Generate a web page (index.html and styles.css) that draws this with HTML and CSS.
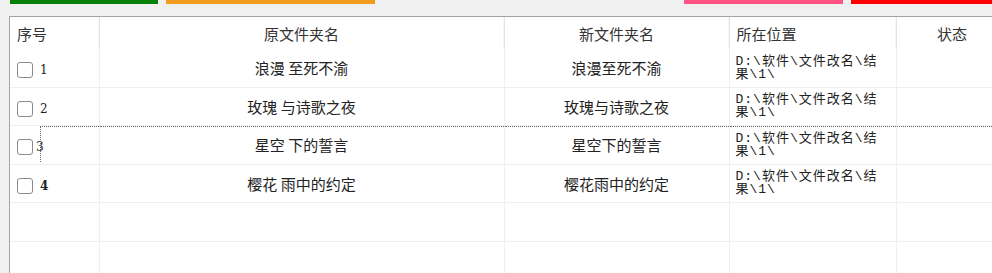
FILE: index.html
```html
<!DOCTYPE html>
<html lang="zh-CN">
<head>
  <meta charset="UTF-8">
  <meta name="viewport" content="width=device-width, initial-scale=1.0">
  <title>文件夹批量改名</title>
  <link rel="stylesheet" href="styles.css">
</head>
<body>
  <!-- 工具栏按钮 -->
  <div class="toolbar">
    <div class="tool-btn btn-green"></div>
    <div class="tool-btn btn-orange"></div>
    <div class="toolbar-space"></div>
    <div class="tool-btn btn-pink"></div>
    <div class="tool-btn btn-red"></div>
  </div>

  <!-- 文件夹列表 -->
  <div class="grid-box">
    <table class="grid">
      <colgroup>
        <col class="col-no">
        <col class="col-old">
        <col class="col-new">
        <col class="col-path">
        <col class="col-state">
      </colgroup>
      <thead>
        <tr>
          <th class="left">序号</th>
          <th>原文件夹名</th>
          <th>新文件夹名</th>
          <th class="left">所在位置</th>
          <th>状态</th>
        </tr>
      </thead>
      <tbody>
        <tr>
          <td class="no"><span class="check"></span><span class="num">1</span></td>
          <td class="center">浪漫 至死不渝</td>
          <td class="center">浪漫至死不渝</td>
          <td class="path">D:\软件\文件改名\结果\1\</td>
          <td></td>
        </tr>
        <tr>
          <td class="no"><span class="check"></span><span class="num">2</span></td>
          <td class="center">玫瑰 与诗歌之夜</td>
          <td class="center">玫瑰与诗歌之夜</td>
          <td class="path">D:\软件\文件改名\结果\1\</td>
          <td></td>
        </tr>
        <tr class="focused">
          <td class="no"><span class="check"></span><span class="num">3</span></td>
          <td class="center">星空 下的誓言</td>
          <td class="center">星空下的誓言</td>
          <td class="path">D:\软件\文件改名\结果\1\</td>
          <td></td>
        </tr>
        <tr>
          <td class="no"><span class="check"></span><span class="num bold">4</span></td>
          <td class="center">樱花 雨中的约定</td>
          <td class="center">樱花雨中的约定</td>
          <td class="path">D:\软件\文件改名\结果\1\</td>
          <td></td>
        </tr>
        <tr class="empty">
          <td></td><td></td><td></td><td></td><td></td>
        </tr>
        <tr class="empty">
          <td></td><td></td><td></td><td></td><td></td>
        </tr>
      </tbody>
    </table>
  </div>
</body>
</html>
```

FILE: styles.css
```css
html, body {
  margin: 0;
  padding: 0;
  overflow: hidden;
}

body {
  background: #f0f0f0;
  color: #333;
  font-family: "Noto Sans CJK SC", "Noto Sans", sans-serif;
  height: 273px;
}

/* Toolbar */
.toolbar {
  display: flex;
  gap: 8px;
  padding-left: 10px;
  height: 4px;
}

.tool-btn {
  height: 4px;
}

.btn-green {
  width: 148px;
  background: #078107;
}

.btn-orange {
  width: 209px;
  background: #f19b1f;
}

.toolbar-space {
  width: 293px;
}

.btn-pink {
  width: 159px;
  background: #ff5383;
}

.btn-red {
  flex: 1;
  background: #ff0000;
}

/* Grid */
.grid-box {
  margin: 12px 0 0 9px;
  border-top: 1px solid #a3a3a3;
  border-left: 1px solid #a3a3a3;
  background: #fff;
  height: 260px;
  overflow: hidden;
}

.grid {
  border-collapse: collapse;
  table-layout: fixed;
  width: 998px;
}

.col-no { width: 89px; }
.col-old { width: 405px; }
.col-new { width: 225px; }
.col-path { width: 167px; }
.col-state { width: 112px; }

.grid th {
  height: 32px;
  padding: 0 7px;
  font-size: 15px;
  font-weight: normal;
  color: #333;
  text-align: center;
  border-right: 1px solid #e4e4e4;
  box-shadow: inset -1px 0 0 #f6f6f6;
}

.grid th.left {
  text-align: left;
}

.grid td {
  height: 37.5px;
  padding: 0 6px;
  font-size: 15px;
  border-right: 1px solid #efefef;
  border-bottom: 1px solid #efefef;
  vertical-align: middle;
  color: #222;
}

.grid td.center {
  text-align: center;
}

.grid td.no {
  padding-left: 7px;
}

.check {
  display: inline-block;
  width: 14px;
  height: 14px;
  border: 1px solid #8a8a8a;
  border-radius: 3px;
  background: #fff;
  vertical-align: middle;
}

.num {
  display: inline-block;
  margin-left: 7px;
  font-family: "DejaVu Serif", serif;
  font-size: 12px;
  vertical-align: middle;
  color: #222;
}

.num.bold {
  font-weight: bold;
}

.grid td.path {
  padding: 0 6px;
  font-family: "Liberation Mono", "Noto Sans CJK SC", monospace;
  font-size: 13px;
  letter-spacing: 1px;
  line-height: 13px;
  color: #222;
  word-break: break-all;
}

/* Row with keyboard focus */
.focused td {
  position: relative;
}

.focused td::after {
  content: "";
  position: absolute;
  left: 0;
  right: 0;
  top: 0;
  border-top: 1px dotted #666;
}

.focused td.no::after {
  left: 30px;
  bottom: 2px;
  border-left: 1px dotted #666;
}

.focused .num {
  margin-left: 3px;
}
```
